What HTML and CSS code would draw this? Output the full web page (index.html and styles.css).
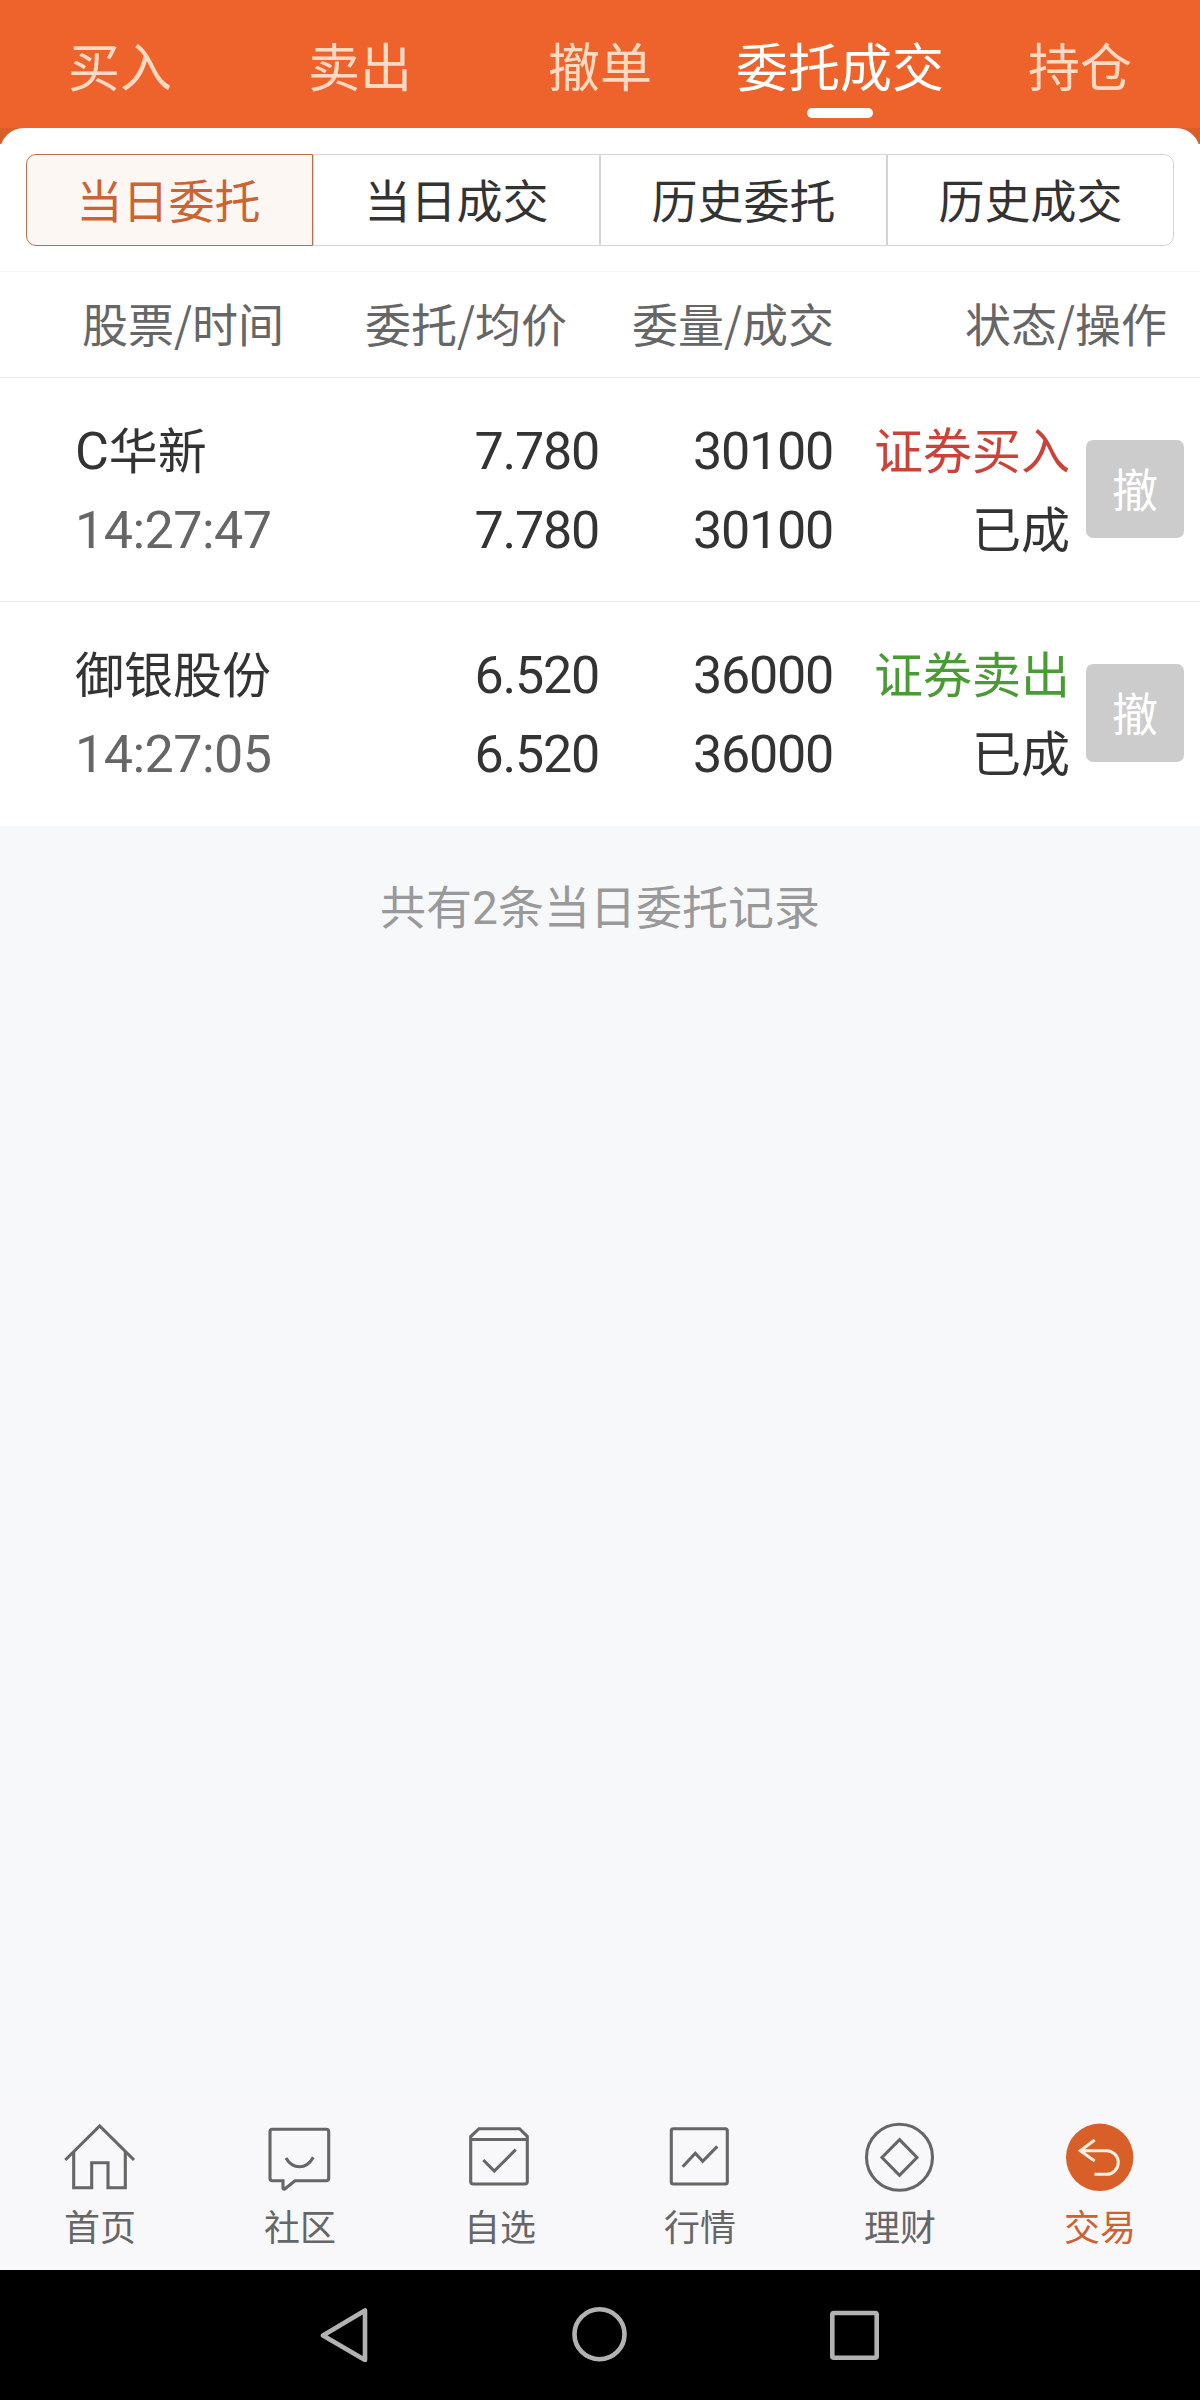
FILE: index.html
```html
<!DOCTYPE html>
<html lang="zh-CN">
<head>
    <meta charset="UTF-8">
    <meta name="viewport" content="width=device-width, initial-scale=1.0">
    <title>委托成交</title>
    <link rel="stylesheet" href="styles.css">
</head>
<body>
    <header class="top-tabs">
        <a class="top-tab">买入</a>
        <a class="top-tab">卖出</a>
        <a class="top-tab">撤单</a>
        <a class="top-tab active">委托成交</a>
        <a class="top-tab">持仓</a>
    </header>

    <main>
        <div class="panel-wrap">
            <div class="panel">
                <div class="segment">
                    <button class="active">当日委托</button>
                    <button>当日成交</button>
                    <button>历史委托</button>
                    <button>历史成交</button>
                </div>
            </div>
        </div>

        <div class="list-head">
            <span class="col-name">股票/时间</span>
            <span class="col-price">委托/均价</span>
            <span class="col-amount">委量/成交</span>
            <span class="col-status">状态/操作</span>
        </div>

        <div class="order">
            <div class="order-name">
                <p><span class="latin">C</span>华新</p>
                <p class="num time">14:27:47</p>
            </div>
            <div class="order-price num">
                <p>7.780</p>
                <p>7.780</p>
            </div>
            <div class="order-amount num">
                <p>30100</p>
                <p>30100</p>
            </div>
            <div class="order-status">
                <p class="buy">证券买入</p>
                <p>已成</p>
            </div>
            <button class="cancel">撤</button>
        </div>

        <div class="order">
            <div class="order-name">
                <p>御银股份</p>
                <p class="num time">14:27:05</p>
            </div>
            <div class="order-price num">
                <p>6.520</p>
                <p>6.520</p>
            </div>
            <div class="order-amount num">
                <p>36000</p>
                <p>36000</p>
            </div>
            <div class="order-status">
                <p class="sell">证券卖出</p>
                <p>已成</p>
            </div>
            <button class="cancel">撤</button>
        </div>

        <p class="summary">共有<span class="num">2</span>条当日委托记录</p>
    </main>

    <nav class="bottom-nav">
        <a class="nav-item">
            <svg viewBox="0 0 72 72">
                <path d="M1.3 39 35.7 5 70 39M9.7 31V66.7H27.7V41.7H44V66.7H61.3V31"/>
            </svg>
            <span>首页</span>
        </a>
        <a class="nav-item">
            <svg viewBox="0 0 72 72">
                <path d="M8.5 8.3H62.2Q64.7 8.3 64.7 10.8V57.3Q64.7 59.8 62.2 59.8H31L20.7 68Q19 68.5 19 67V59.8H8.5Q6 59.8 6 57.3V10.8Q6 8.3 8.5 8.3Z"/>
                <path d="M22 37Q27 45.8 35.5 45.8T49.3 36.3"/>
            </svg>
            <span>社区</span>
        </a>
        <a class="nav-item">
            <svg viewBox="0 0 72 72">
                <path d="M6.7 18.5V60.5Q6.7 63 9.2 63H60.8Q63.3 63 63.3 60.5V18.5ZM6.7 18.5V15.5L15 7.7H55.5L63.3 15.5V18.5"/>
                <path d="M19.3 39 30.3 50 51.7 28.7"/>
            </svg>
            <span>自选</span>
        </a>
        <a class="nav-item">
            <svg viewBox="0 0 72 72">
                <rect x="7.3" y="7.7" width="56" height="55.3" rx="2"/>
                <path d="M18.7 45.7 31.3 32.3 38.7 40.3 53.3 25.3"/>
            </svg>
            <span>行情</span>
        </a>
        <a class="nav-item">
            <svg viewBox="0 0 72 72">
                <circle cx="35.5" cy="36.3" r="33"/>
                <path d="M35.5 18.7 53 36.5 35.5 54.3 18 36.5Z"/>
            </svg>
            <span>理财</span>
        </a>
        <a class="nav-item active">
            <svg viewBox="0 0 72 72">
                <circle class="disc" cx="35.7" cy="36.3" r="33.7"/>
                <path class="arrow" d="M30.7 19 16.3 29.7 30.7 40M17 29.7H42.5A11.8 11.8 0 0 1 42.5 53.3H30.5"/>
            </svg>
            <span>交易</span>
        </a>
    </nav>

    <footer class="system-bar">
        <svg viewBox="0 0 60 60">
            <path d="M8 33.5 50 8.5V58Z"/>
        </svg>
        <svg viewBox="0 0 60 60">
            <circle cx="29.5" cy="32.3" r="25"/>
        </svg>
        <svg viewBox="0 0 60 60">
            <rect x="7.3" y="11" width="44.4" height="44.7" rx="1.5"/>
        </svg>
    </footer>
</body>
</html>
```

FILE: styles.css
```css
* {
    box-sizing: border-box;
}

body {
    display: flex;
    flex-direction: column;
    height: 2400px;
    margin: 0;
    background: #f7f8fa;
    color: #333;
    font-family: "Noto Sans CJK SC", sans-serif;
    font-size: 49px;
}

p {
    margin: 0;
}

button {
    padding: 0;
    font-family: inherit;
}

main {
    flex: 1;
}

/* Top tabs */
.top-tabs {
    display: flex;
    height: 128px;
    background: #ed632b;
}

.top-tab {
    position: relative;
    flex: 1;
    line-height: 129px;
    text-align: center;
    white-space: nowrap;
    font-size: 52px;
    color: #ffd9c2;
}

.top-tab.active {
    color: #fff;
}

.top-tab.active::after {
    content: "";
    position: absolute;
    left: 87px;
    top: 108px;
    width: 66px;
    height: 10px;
    border-radius: 5px;
    background: #fff;
}

/* White panel with rounded top over the orange */
.panel-wrap {
    background: linear-gradient(#d95f28 16px, #fff 16px);
}

.panel {
    height: 144px;
    padding: 26px 26px 0;
    background: #fff;
    border-radius: 24px 24px 0 0;
    border-bottom: 1px solid #f5f5f5;
}

.segment {
    display: flex;
    height: 92px;
}

.segment button {
    flex: 1;
    padding-bottom: 4px;
    border: 1px solid #d4d4d6;
    background: #fff;
    color: #333;
    font-size: 46px;
    line-height: 84px;
}

.segment button:first-child {
    border-radius: 10px 0 0 10px;
}

.segment button:last-child {
    border-radius: 0 10px 10px 0;
}

.segment button.active {
    border-color: #b8714c;
    background: #fdf7f3;
    color: #cb6433;
    text-indent: -2px;
}

/* List header */
.list-head {
    display: flex;
    height: 106px;
    padding: 0 33px 0 82px;
    background: #fff;
    border-bottom: 1px solid #e9e9e9;
    color: #666;
    font-size: 46px;
    line-height: 100px;
    white-space: nowrap;
}

.col-name {
    width: 283px;
}

.col-price {
    width: 267px;
}

.col-status {
    margin-left: auto;
}

/* Order rows */
.order {
    display: flex;
    align-items: center;
    height: 224px;
    padding: 0 16px 0 75px;
    background: #fff;
    border-bottom: 1px solid #e9e9e9;
    white-space: nowrap;
}

.order:last-of-type {
    border-bottom-color: #fff;
}

.order p {
    height: 79px;
    line-height: 73px;
}

.num,
.latin {
    font-family: Roboto, "Noto Sans CJK SC", sans-serif;
}

.latin {
    font-size: 52px;
    line-height: 1;
}

.order .num {
    font-size: 52px;
    letter-spacing: -1.2px;
}

.order p.num,
.order .num p {
    line-height: 81px;
}

.order .time {
    color: #666;
    letter-spacing: -0.5px;
}

.order-name {
    width: 300px;
}

.order-price {
    width: 224px;
    text-align: right;
}

.order-amount {
    width: 234px;
    text-align: right;
}

.order-status {
    width: 237px;
    text-align: right;
}

.buy {
    color: #cb4238;
}

.sell {
    color: #4a9a35;
}

.cancel {
    width: 98px;
    height: 98px;
    margin: 0 0 2px auto;
    padding-bottom: 3px;
    border: none;
    border-radius: 7px;
    background: #ccc;
    color: #fff;
    font-size: 46px;
    line-height: 93px;
}

.summary {
    padding-top: 45px;
    text-align: center;
    font-size: 46px;
    line-height: 66px;
    color: #999;
}

/* Bottom navigation */
.bottom-nav {
    display: flex;
    height: 170px;
    padding-top: 21px;
    background: #f8f8fb;
}

.nav-item {
    display: flex;
    flex: 1;
    flex-direction: column;
    align-items: center;
    color: #666;
    font-size: 36px;
    line-height: 65px;
}

.nav-item svg {
    width: 72px;
    height: 72px;
    fill: none;
    stroke: currentColor;
    stroke-width: 3.1;
}

.nav-item.active {
    color: #cf6130;
}

.nav-item .disc {
    fill: #d95f28;
    stroke: none;
}

.nav-item .arrow {
    stroke: #fff0e4;
    stroke-width: 3;
}

/* Android keys */
.system-bar {
    display: flex;
    justify-content: center;
    gap: 195px;
    height: 130px;
    padding-top: 32px;
    background: #000;
}

.system-bar svg {
    width: 60px;
    height: 60px;
    fill: none;
    stroke: #b2b2b2;
    stroke-width: 4.6;
    stroke-linejoin: round;
}
```
